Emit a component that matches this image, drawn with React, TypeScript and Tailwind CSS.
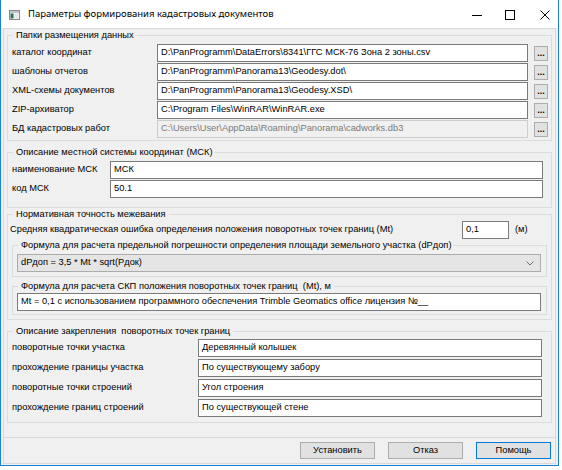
import React from "react";

function Field({
  value,
  className = "",
  disabled = false,
}: {
  value: string;
  className?: string;
  disabled?: boolean;
}) {
  return (
    <div
      className={`h-[18px] border flex items-center pl-[3px] overflow-hidden whitespace-nowrap ${
        disabled
          ? "border-[#cccccc] bg-[#f0f0f0] text-[#7a7a7a]"
          : "border-[#7a7a7a] bg-white text-black"
      } ${className}`}
    >
      {value}
    </div>
  );
}

function Group({
  title,
  className = "",
  children,
}: {
  title: string;
  className?: string;
  children: React.ReactNode;
}) {
  return (
    <fieldset className={`border border-[#dcdcdc] min-w-0 ${className}`}>
      <legend className="ml-[1px] px-[3px] leading-[12px] whitespace-pre">{title}</legend>
      {children}
    </fieldset>
  );
}

function Dots() {
  return (
    <div className="w-[14px] h-[15px] shrink-0 border border-[#adadad] bg-[#e1e1e1] flex items-end justify-center text-[9px] leading-[9px] font-bold pb-[2px]">
      ...
    </div>
  );
}

function Btn({ label, focused = false }: { label: string; focused?: boolean }) {
  return (
    <div
      className={`w-[75px] h-[17px] border flex items-center justify-center bg-[#e1e1e1] ${
        focused ? "border-[#0078d7]" : "border-[#adadad]"
      }`}
    >
      {label}
    </div>
  );
}

export default function App() {
  const paths = [
    ["каталог координат", "D:\\PanProgramm\\DataErrors\\8341\\ГГС МСК-76 Зона 2 зоны.csv", false],
    ["шаблоны отчетов", "D:\\PanProgramm\\Panorama13\\Geodesy.dot\\", false],
    ["XML-схемы документов", "D:\\PanProgramm\\Panorama13\\Geodesy.XSD\\", false],
    ["ZIP-архиватор", "C:\\Program Files\\WinRAR\\WinRAR.exe", false],
    ["БД кадастровых работ", "C:\\Users\\User\\AppData\\Roaming\\Panorama\\cadworks.db3", true],
  ] as const;

  const marks = [
    ["поворотные точки участка", "Деревянный колышек"],
    ["прохождение границы участка", "По существующему забору"],
    ["поворотные точки строений", "Угол строения"],
    ["прохождение границ строений", "По существующей стене"],
  ];

  return (
    <div className="w-[562px] h-[470px] bg-white font-['Liberation_Sans',Arial,sans-serif] text-[9.3px] text-black">
      <div className="w-[559px] h-[466px] border-x border-b border-[#1883d7] flex flex-col">
        {/* Title bar */}
        <div className="h-[28px] shrink-0 bg-white flex items-center pt-[1px]">
          <svg width="11" height="10" viewBox="0 0 11 10" className="ml-[8px] shrink-0">
            <rect x="0.5" y="0.5" width="10" height="9" fill="#f4f4f4" stroke="#8a8a8a" />
            <rect x="1" y="1" width="9" height="2" fill="#b9c6cf" />
            <rect x="1.5" y="3.5" width="3" height="5" fill="#2f6f63" />
            <rect x="5.5" y="3.5" width="4" height="5" fill="#e6e6e6" />
          </svg>
          <span className="ml-[8px] font-['Noto_Sans',sans-serif] text-[9.5px] text-black">
            Параметры формирования кадастровых документов
          </span>
          <div className="ml-auto flex items-center">
            <svg width="10" height="10" viewBox="0 0 10 10">
              <line x1="0" y1="5.5" x2="10" y2="5.5" stroke="#000" strokeWidth="1" />
            </svg>
            <svg width="10" height="10" viewBox="0 0 10 10" className="ml-[23px]">
              <rect x="0.5" y="0.5" width="9" height="9" fill="none" stroke="#000" strokeWidth="1" />
            </svg>
            <svg width="10" height="10" viewBox="0 0 10 10" className="ml-[25px] mr-[8px]">
              <path d="M0.5 0.5 L9.5 9.5 M9.5 0.5 L0.5 9.5" stroke="#000" strokeWidth="1" />
            </svg>
          </div>
        </div>

        {/* Body */}
        <div className="flex-1 bg-[#f0f0f0] flex flex-col px-[2px] pb-[1px]">
          <div className="flex-1 border border-[#d9d9d9] flex flex-col">
            <div className="h-[409px] shrink-0 border-b border-[#d9d9d9] px-[3px] flex flex-col">
              {/* Group 1 */}
              <Group title="Папки размещения данных" className="pl-[4px] pr-[3px] pt-[3px] pb-[2px]">
                <div className="flex flex-col gap-[1px]">
                  {paths.map(([label, value, dis]) => (
                    <div key={label} className="flex items-center h-[18px]">
                      <div className="w-[145px] shrink-0">{label}</div>
                      <Field value={value} disabled={dis} className="flex-1" />
                      <div className="ml-[6px]">
                        <Dots />
                      </div>
                    </div>
                  ))}
                </div>
              </Group>

              {/* Group 2 */}
              <Group
                title="Описание местной системы координат (МСК)"
                className="mt-[5px] pl-[4px] pr-[3px] pt-[3px] pb-[9px]"
              >
                <div className="flex flex-col gap-[1px]">
                  <div className="flex items-center">
                    <div className="w-[98px] shrink-0">наименование МСК</div>
                    <Field value="МСК" className="flex-1 mr-[5px] h-[17px]" />
                  </div>
                  <div className="flex items-center">
                    <div className="w-[98px] shrink-0">код МСК</div>
                    <Field value="50.1" className="flex-1 mr-[5px] h-[17px]" />
                  </div>
                </div>
              </Group>

              {/* Group 3 */}
              <Group
                title="Нормативная точность межевания"
                className="pl-[4px] pr-[4px] pt-[1px] pb-[4px]"
              >
                <div className="flex items-center h-[18px]">
                  <div className="w-[450px] shrink-0 -ml-[2px]">
                    Средняя квадратическая ошибка определения положения поворотных точек границ (Mt)
                  </div>
                  <Field value="0,1" className="w-[47px] ml-[2px]" />
                  <div className="ml-[6px]">(м)</div>
                </div>
                <Group
                  title="Формула для расчета предельной погрешности определения площади земельного участка (dPдоп)"
                  className="pl-[4px] pr-[4px] pt-[3px] pb-[4px]"
                >
                  <div className="h-[18px] border border-[#acacac] bg-[#e5e5e5] flex items-center pl-[3px] pr-[6px] mr-[1px]">
                    <span className="flex-1">dPдоп = 3,5 * Mt * sqrt(Pдок)</span>
                    <svg width="8" height="5" viewBox="0 0 8 5">
                      <path d="M0.5 0.5 L4 4 L7.5 0.5" fill="none" stroke="#707070" strokeWidth="1" />
                    </svg>
                  </div>
                </Group>
                <Group
                  title="Формула для расчета СКП положения поворотных точек границ  (Mt), м"
                  className="mt-[3px] pl-[4px] pr-[4px] pt-[1px] pb-[3px]"
                >
                  <Field
                    value="Mt = 0,1 с использованием программного обеспечения Trimble Geomatics office лицензия №__"
                    className="mr-[1px]"
                  />
                </Group>
              </Group>

              {/* Group 4 */}
              <Group
                title="Описание закрепления  поворотных точек границ"
                className="mt-[5px] pl-[4px] pr-[3px] pt-[2px] pb-[5px]"
              >
                <div className="flex flex-col gap-[2px]">
                  {marks.map(([label, value]) => (
                    <div key={label} className="flex items-center">
                      <div className="w-[186px] shrink-0">{label}</div>
                      <Field value={value} className="flex-1 mr-[6px]" />
                    </div>
                  ))}
                </div>
              </Group>
            </div>

            {/* Buttons */}
            <div className="flex-1 flex items-center justify-end gap-[13px] pr-[4px]">
              <Btn label="Установить" />
              <Btn label="Отказ" />
              <Btn label="Помощь" focused />
            </div>
          </div>
        </div>
      </div>
    </div>
  );
}
